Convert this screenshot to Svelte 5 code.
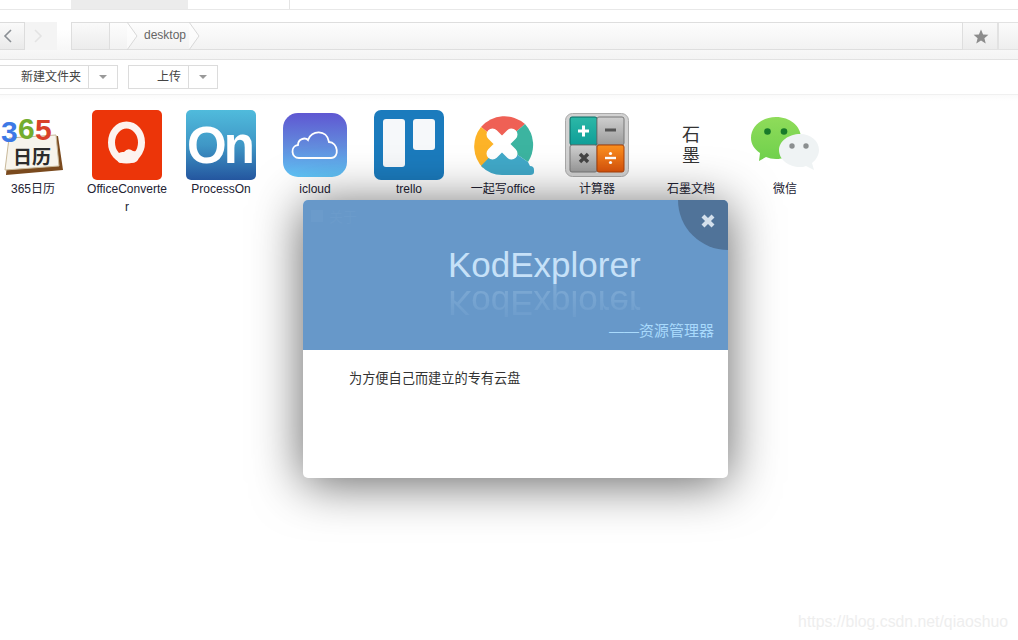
<script>
  const apps = [
    { name: '365日历', icon: 'cal' },
    { name: 'OfficeConverter', icon: 'oc' },
    { name: 'ProcessOn', icon: 'on' },
    { name: 'icloud', icon: 'icloud' },
    { name: 'trello', icon: 'trello' },
    { name: '一起写office', icon: 'yqx' },
    { name: '计算器', icon: 'calc' },
    { name: '石墨文档', icon: 'shimo' },
    { name: '微信', icon: 'wx' }
  ];
</script>

<div class="page">
  <div class="tabs">
    <div class="tab blank"></div>
    <div class="tab active"></div>
    <div class="tab plain"></div>
  </div>

  <div class="address">
    <div class="nav back">
      <svg width="10" height="14" viewBox="0 0 10 14"><path d="M8 1 L2 7 L8 13" fill="none" stroke="#8a8f94" stroke-width="1.6" /></svg>
    </div>
    <div class="nav fwd">
      <svg width="10" height="14" viewBox="0 0 10 14"><path d="M2 1 L8 7 L2 13" fill="none" stroke="#e3e3e3" stroke-width="1.6" /></svg>
    </div>
    <div class="crumbs">
      <div class="home"></div>
      <div class="crumb first">
        <svg class="chev" width="11" height="28" viewBox="0 0 11 28"><path d="M0 0 L10 14 L0 28" fill="#fff" fill-opacity="0.5" stroke="#d8d8d8" /></svg>
      </div>
      <div class="crumb">
        <span>desktop</span>
        <svg class="chev" width="11" height="28" viewBox="0 0 11 28"><path d="M0 0 L10 14 L0 28" fill="#fff" fill-opacity="0.5" stroke="#d8d8d8" /></svg>
      </div>
    </div>
    <div class="star">
      <svg width="16" height="15" viewBox="0 0 16 15"><path d="M8 0.5 L10.1 5.4 L15.4 5.8 L11.4 9.2 L12.7 14.4 L8 11.6 L3.3 14.4 L4.6 9.2 L0.6 5.8 L5.9 5.4 Z" fill="#8c8c8c" /></svg>
    </div>
    <div class="end"></div>
  </div>

  <div class="toolbar">
    <div class="btn newfolder"><span>新建文件夹</span></div>
    <div class="drop"><i></i></div>
    <div class="btn upload"><span>上传</span></div>
    <div class="drop"><i></i></div>
  </div>

  <div class="desktop">
    {#each apps as app}
      <div class="app">
        <div class="icon">
          {#if app.icon === 'cal'}
            <svg width="70" height="70" viewBox="0 0 70 70">
              <path d="M11 29 L60 26 L65 60 L8 65 Z" fill="#7a4a1e" />
              <path d="M11 28 L58 25 L61 56 L7 60 Z" fill="#f7f4ec" stroke="#c9b99a" />
              <text x="15" y="54" class="cal-day">日历</text>
              <text x="3" y="32" class="n3">3</text>
              <text x="20" y="29" class="n6">6</text>
              <text x="37" y="30" class="n5">5</text>
            </svg>
          {:else if app.icon === 'oc'}
            <svg width="70" height="70" viewBox="0 0 70 70">
              <rect width="70" height="70" rx="5" fill="#ec3509" />
              <ellipse cx="34.500" cy="32.500" rx="15" ry="17.500" fill="none" stroke="#fdf3ef" stroke-width="7" />
              <path d="M25 48 Q25 41 32 42 Q36 37 41 41 Q48 41 47 47 Q46 53 39 53 L29 53 Q25 53 25 48 Z" fill="#fdf3ef" />
            </svg>
          {:else if app.icon === 'on'}
            <svg width="70" height="70" viewBox="0 0 70 70">
              <defs><linearGradient id="ong" x1="0" y1="0" x2="0" y2="1"><stop offset="0" stop-color="#50bbdc" /><stop offset="0.5" stop-color="#3f97c6" /><stop offset="1" stop-color="#24569f" /></linearGradient></defs>
              <rect width="70" height="70" rx="5" fill="url(#ong)" />
              <text x="1" y="53" class="on-text">On</text>
            </svg>
          {:else if app.icon === 'icloud'}
            <svg width="64" height="64" viewBox="0 0 64 64">
              <defs><linearGradient id="icg" x1="0" y1="0" x2="0" y2="1"><stop offset="0" stop-color="#5f57d2" /><stop offset="0.5" stop-color="#6289dc" /><stop offset="1" stop-color="#60c4f7" /></linearGradient></defs>
              <rect width="64" height="64" rx="15" fill="url(#icg)" />
              <path d="M16 45 C8 45 7 33 15 32 C15 26 22 24 25 27 C28 17 44 16 46 29 C55 29 57 45 48 45 Z" fill="none" stroke="#fff" stroke-width="1.8" />
            </svg>
          {:else if app.icon === 'trello'}
            <svg width="70" height="70" viewBox="0 0 70 70">
              <rect width="70" height="70" rx="7" fill="#1b7bbd" />
              <rect x="9" y="9" width="22" height="48" rx="3" fill="#f6f8fa" />
              <rect x="39" y="9" width="22" height="31" rx="3" fill="#f6f8fa" />
            </svg>
          {:else if app.icon === 'yqx'}
            <svg width="70" height="70" viewBox="0 0 70 70">
              <path d="M34 34 L13 17 A31 31 0 0 1 57 14 Z" fill="#ef6055" />
              <path d="M34 34 L13 17 A31 31 0 0 0 15 58 Z" fill="#fdb327" />
              <path d="M34 34 L57 14 A31 31 0 0 1 60 52 Z" fill="#3cb4a0" />
              <path d="M34 34 L60 52 L62 56 Q66 56 66 60 L66 62 Q66 65 62 65 L34 65 Q22 65 13 56 Z" fill="#41a9c9" />
              <path d="M24.500 24.500 L43.500 43.500 M43.500 24.500 L24.500 43.500" stroke="#fff" stroke-width="12" stroke-linecap="round" />
            </svg>
          {:else if app.icon === 'calc'}
            <svg width="64" height="64" viewBox="0 0 64 64">
              <defs>
                <linearGradient id="cgrey" x1="0" y1="0" x2="0" y2="1"><stop offset="0" stop-color="#cfcfcf" /><stop offset="1" stop-color="#9b9b9b" /></linearGradient>
                <linearGradient id="cteal" x1="0" y1="0" x2="0" y2="1"><stop offset="0" stop-color="#2cb8a7" /><stop offset="1" stop-color="#0e9e98" /></linearGradient>
                <linearGradient id="corg" x1="0" y1="0" x2="0" y2="1"><stop offset="0" stop-color="#fb9120" /><stop offset="1" stop-color="#d9530c" /></linearGradient>
              </defs>
              <rect x="0.5" y="0.5" width="63" height="63" rx="7" fill="#d2d2d2" stroke="#aaa" />
              <rect x="5" y="4" width="27" height="28" rx="2" fill="url(#cteal)" stroke="#0b6b64" />
              <rect x="32" y="4" width="27" height="28" rx="2" fill="url(#cgrey)" stroke="#777" />
              <rect x="5" y="32" width="27" height="27" rx="2" fill="url(#cgrey)" stroke="#777" />
              <rect x="32" y="32" width="27" height="27" rx="2" fill="url(#corg)" stroke="#a8400a" />
              <path d="M13 18 H24 M18.5 12.5 V23.5" stroke="#fff" stroke-width="3" />
              <path d="M40 17 H51" stroke="#555" stroke-width="3" />
              <path d="M15 41 L23 49 M23 41 L15 49" stroke="#444" stroke-width="3.4" />
              <path d="M40 45 H51" stroke="#fff" stroke-width="2.4" /><circle cx="45.5" cy="40.5" r="1.6" fill="#fff" /><circle cx="45.5" cy="49.5" r="1.6" fill="#fff" />
            </svg>
          {:else if app.icon === 'shimo'}
            <div class="shimo"><span>石</span><span>墨</span></div>
          {:else if app.icon === 'wx'}
            <svg width="70" height="70" viewBox="0 0 70 70">
              <defs><linearGradient id="wxg" x1="0" y1="0" x2="0" y2="1"><stop offset="0" stop-color="#8fdc5a" /><stop offset="1" stop-color="#6fd04c" /></linearGradient></defs>
              <path d="M26 7 C40 7 51 16 51 28 C51 40 40 49 26 49 C22 49 19 48 16 47 L9 51 L10 43 C4 39 1 34 1 28 C1 16 12 7 26 7 Z" fill="url(#wxg)" />
              <circle cx="17.5" cy="21.5" r="3.3" fill="#187a2a" /><circle cx="34" cy="21.5" r="3.3" fill="#187a2a" />
              <path d="M50 24 C61 24 69 31 69 40 C69 45 66 50 62 53 L64 60 L56 56 C54 57 52 57 50 57 C39 57 29 50 29 40 C29 31 39 24 50 24 Z" fill="#eff3f4" />
              <circle cx="42" cy="36" r="2.7" fill="#8b8f90" /><circle cx="56" cy="36" r="2.7" fill="#8b8f90" />
            </svg>
          {/if}
        </div>
        <div class="label">{app.name}</div>
      </div>
    {/each}
  </div>

  <div class="dialog">
    <div class="hero">
      <div class="faint"><i></i>关于</div>
      <div class="corner"></div>
      <svg class="close" width="16" height="16" viewBox="0 0 16 16"><path d="M3 3 L13 13 M13 3 L3 13" stroke="#d4e0ec" stroke-width="4.200" /></svg>
      <div class="title">KodExplorer</div>
      <div class="mirror">KodExplorer</div>
      <div class="sub">——资源管理器</div>
    </div>
    <div class="body">为方便自己而建立的专有云盘</div>
  </div>

  <div class="watermark">https://blog.csdn.net/qiaoshuo</div>
</div>

<style>
  :global(body) {
    margin: 0;
    background: #fff;
  }
  .page {
    position: relative;
    width: 1018px;
    height: 640px;
    overflow: hidden;
    font-family: "Liberation Sans", "Noto Sans CJK SC", sans-serif;
    font-size: 12px;
    color: #335;
    background: #fff;
  }
  .tabs {
    display: flex;
    height: 9px;
    border-bottom: 1px solid #e8e8e8;
  }
  .tab.blank { width: 71px; }
  .tab.active { width: 117px; background: #ececec; }
  .tab.plain { width: 101px; border-right: 1px solid #e4e4e4; }

  .address {
    display: flex;
    height: 28px;
    padding-top: 12px;
    padding-bottom: 9px;
    border-bottom: 1px solid #e2e2e2;
    background: linear-gradient(#fff, #fff 40%, #f4f4f4);
  }
  .nav {
    height: 28px;
    display: flex;
    align-items: center;
    justify-content: center;
    box-sizing: border-box;
  }
  .back {
    width: 25px;
    padding-right: 9px;
    background: linear-gradient(#fafafa, #eaeaea);
    border: 1px solid #dcdcdc;
    border-left: 0;
  }
  .fwd {
    width: 32px;
    padding-right: 6px;
    background: #f4f4f4;
    margin-right: 14px;
  }
  .crumbs {
    flex: 1;
    display: flex;
    height: 28px;
    box-sizing: border-box;
    border: 1px solid #dedede;
    background: linear-gradient(#fdfdfd, #f2f2f2);
  }
  .home {
    width: 37px;
    border-right: 1px solid #dedede;
    background: linear-gradient(#fafafa, #ececec);
  }
  .crumb {
    position: relative;
    height: 26px;
    line-height: 24px;
    color: #666;
  }
  .crumb.first { width: 18px; }
  .crumb span { display: block; padding: 0 4px 0 16px; font-size: 12px; }
  .chev {
    position: absolute;
    right: -10px;
    top: -1px;
  }
  .star {
    width: 35px;
    height: 28px;
    padding-left: 2px;
    display: flex;
    align-items: center;
    justify-content: center;
    box-sizing: border-box;
    border: 1px solid #e2e2e2;
    border-left: 0;
    background: linear-gradient(#f9f9f9, #ececec);
  }
  .end {
    flex: none;
    width: 20px;
    height: 28px;
    box-sizing: border-box;
    border-left: 1px solid #e2e2e2;
    border-top: 1px solid #e2e2e2;
    border-bottom: 1px solid #e2e2e2;
    background: linear-gradient(#fbfbfb, #eeeeee);
  }

  .toolbar {
    display: flex;
    height: 35px;
    box-sizing: border-box;
    padding-top: 5px;
    border-bottom: 1px solid #f0f0f0;
  }
  .btn {
    height: 24px;
    box-sizing: border-box;
    border: 1px solid #dcdcdc;
    line-height: 22px;
    color: #444;
    text-align: right;
    background: #fff;
  }
  .btn.newfolder { width: 89px; border-left: 0; padding-right: 7px; }
  .btn.upload { width: 61px; margin-left: 10px; padding-right: 7px; }
  .drop {
    width: 30px;
    height: 24px;
    margin-left: -1px;
    box-sizing: border-box;
    border: 1px solid #dcdcdc;
    display: flex;
    align-items: center;
    justify-content: center;
  }
  .drop i {
    width: 0;
    height: 0;
    border-left: 4px solid transparent;
    border-right: 4px solid transparent;
    border-top: 4px solid #999;
  }

  .desktop {
    display: flex;
    margin-left: -14px;
    padding-top: 15px;
    background: linear-gradient(#fafafa, #fff 6px);
  }
  .app {
    width: 94px;
    flex: none;
    display: flex;
    flex-direction: column;
    align-items: center;
  }
  .icon {
    width: 70px;
    height: 70px;
    display: flex;
    align-items: center;
    justify-content: center;
  }
  .label {
    width: 81px;
    line-height: 18px;
    text-align: center;
    word-break: break-all;
    color: #223;
    font-size: 12px;
  }
  .cal-day { font-size: 19px; font-weight: 700; fill: #2b2b2b; }
  .n3, .n6, .n5 { font-size: 30px; font-weight: 700; font-family: "Liberation Sans", sans-serif; }
  .n3 { fill: #3d79e6; }
  .n6 { fill: #73ad2e; }
  .n5 { fill: #d9402a; }
  .on-text {
    font-size: 51px;
    font-weight: 700;
    fill: #fff;
    letter-spacing: -3px;
  }
  .shimo {
    display: flex;
    flex-direction: column;
    align-items: center;
    margin-top: 2px;
    font-size: 18px;
    line-height: 21px;
    color: #333;
  }

  .dialog {
    position: absolute;
    left: 303px;
    top: 200px;
    width: 425px;
    height: 278px;
    border-radius: 5px;
    overflow: hidden;
    background: #fff;
    box-shadow: 0 5px 50px rgba(0, 0, 0, 0.62);
  }
  .hero {
    position: relative;
    height: 150px;
    background: #6798c9;
    overflow: hidden;
  }
  .faint {
    position: absolute;
    left: 8px;
    top: 6px;
    display: flex;
    align-items: center;
    gap: 6px;
    color: #6b9bcb;
    font-size: 14px;
  }
  .faint i {
    width: 12px;
    height: 12px;
    background: #6b9bcb;
  }
  .corner {
    position: absolute;
    right: -50px;
    top: -50px;
    width: 100px;
    height: 100px;
    border-radius: 50%;
    background: #507399;
  }
  .close {
    position: absolute;
    right: 12px;
    top: 13px;
  }
  .title, .mirror {
    position: absolute;
    left: 145px;
    width: 200px;
    font-size: 35px;
    line-height: 40px;
    color: #c6e1f8;
  }
  .title { top: 45px; }
  .mirror {
    top: 83px;
    transform: scaleY(-1);
    opacity: 0.25;
    -webkit-mask-image: linear-gradient(to top, #000, rgba(0, 0, 0, 0.15));
    mask-image: linear-gradient(to top, #000, rgba(0, 0, 0, 0.15));
  }
  .sub {
    position: absolute;
    right: 14px;
    top: 120px;
    font-size: 15px;
    line-height: 22px;
    color: #a9dafc;
  }
  .body {
    padding: 20px 46px;
    line-height: 18px;
    color: #333;
    font-size: 13.2px;
  }
  .watermark {
    position: absolute;
    right: 10px;
    bottom: 9px;
    font-size: 15.8px;
    color: #eeeeee;
  }
</style>
